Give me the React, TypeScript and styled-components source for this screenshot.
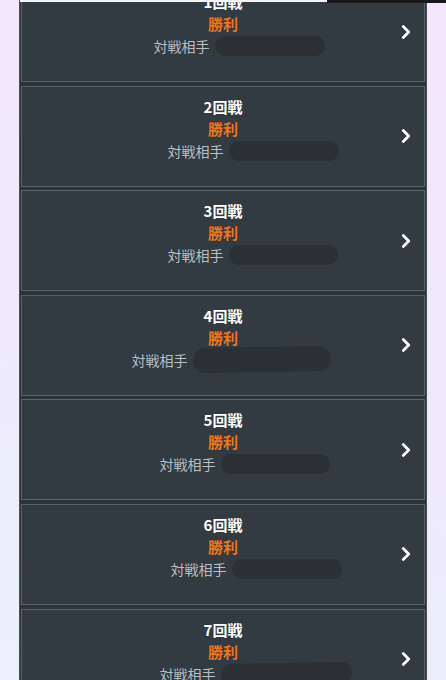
import React from 'react';
import styled, { createGlobalStyle } from 'styled-components';
import { ChevronRight } from 'lucide-react';

type Match = {
  round: number;
  nameWidth: number;
  pillWidth: number;
  pillHeight: number;
  tilt: number;
};

const matches: Match[] = [
  { round: 1, nameWidth: 78, pillWidth: 110, pillHeight: 20, tilt: 0 },
  { round: 2, nameWidth: 50, pillWidth: 110, pillHeight: 20, tilt: 0 },
  { round: 3, nameWidth: 50, pillWidth: 109, pillHeight: 20, tilt: 0 },
  { round: 4, nameWidth: 122, pillWidth: 138, pillHeight: 25, tilt: -1 },
  { round: 5, nameWidth: 66, pillWidth: 109, pillHeight: 20, tilt: 0 },
  { round: 6, nameWidth: 44, pillWidth: 110, pillHeight: 20, tilt: 0 },
  { round: 7, nameWidth: 66, pillWidth: 131, pillHeight: 22, tilt: -1 },
];

const App = () => {
  return (
    <>
      <GlobalStyle />
      <Page>
        <TopStrip>
          <StripLight />
          <StripDark />
        </TopStrip>
        <List>
          {matches.map((m) => (
            <Card key={m.round}>
              <Spacer />
              <Content>
                <Round>{m.round}回戦</Round>
                <Result>勝利</Result>
                <OpponentRow>
                  <OpponentLabel>対戦相手</OpponentLabel>
                  <OpponentName $width={m.nameWidth}>
                    <Redact
                      $width={m.pillWidth}
                      $height={m.pillHeight}
                      $tilt={m.tilt}
                    />
                  </OpponentName>
                </OpponentRow>
              </Content>
              <Arrow>
                <ChevronRight size={22} strokeWidth={3} color="#ffffff" />
              </Arrow>
            </Card>
          ))}
        </List>
      </Page>
    </>
  );
};

export default App;

const GlobalStyle = createGlobalStyle`
  * {
    box-sizing: border-box;
  }

  body {
    margin: 0;
    font-family: "Noto Sans CJK JP", "Noto Sans", sans-serif;
    background: #eeeafa;
  }
`;

const Page = styled.div`
  position: relative;
  width: 446px;
  height: 680px;
  overflow: hidden;
  background: linear-gradient(200deg, #f4e6fd 0%, #efe9fb 50%, #eaf0fc 100%);
`;

const TopStrip = styled.div`
  position: absolute;
  top: 0;
  left: 20px;
  right: 0;
  height: 3px;
  display: flex;
  z-index: 2;
`;

const StripLight = styled.div`
  width: 307px;
  height: 2px;
  background: #f4f4f6;
`;

const StripDark = styled.div`
  flex: 1;
  height: 3px;
  background: #15191c;
`;

const List = styled.div`
  margin: -19px 19px 0 19px;
  padding: 0 1px;
  background: #2c3439;
  border-left: 1px solid #4a5258;
  border-right: 1px solid #4a5258;
  display: flex;
  flex-direction: column;
  gap: 3.6px;
`;

const Card = styled.div`
  height: 101px;
  display: grid;
  grid-template-columns: 40px 1fr 40px;
  align-items: start;
  background: #323b41;
  border: 1px solid #59626a;
`;

const Spacer = styled.div``;

const Content = styled.div`
  padding-top: 9px;
  display: flex;
  flex-direction: column;
  align-items: center;
`;

const Round = styled.div`
  font-size: 15px;
  font-weight: 700;
  line-height: 22px;
  color: #ffffff;
`;

const Result = styled.div`
  font-size: 15px;
  font-weight: 700;
  line-height: 22px;
  color: #ee7418;
`;

const OpponentRow = styled.div`
  display: flex;
  align-items: center;
  gap: 5px;
  height: 22px;
`;

const OpponentLabel = styled.span`
  font-size: 14px;
  line-height: 22px;
  color: #b9bec2;
`;

const OpponentName = styled.span<{ $width: number }>`
  position: relative;
  display: inline-block;
  width: ${(p) => p.$width}px;
  height: 22px;
`;

const Redact = styled.span<{ $width: number; $height: number; $tilt: number }>`
  position: absolute;
  left: 0;
  top: 50%;
  width: ${(p) => p.$width}px;
  height: ${(p) => p.$height}px;
  margin-top: ${(p) => -p.$height / 2}px;
  border-radius: ${(p) => p.$height / 2}px;
  background: #2a3034;
  transform: rotate(${(p) => p.$tilt}deg);
`;

const Arrow = styled.div`
  align-self: center;
  display: flex;
  align-items: center;
  justify-content: flex-start;
  padding-left: 11px;
`;
